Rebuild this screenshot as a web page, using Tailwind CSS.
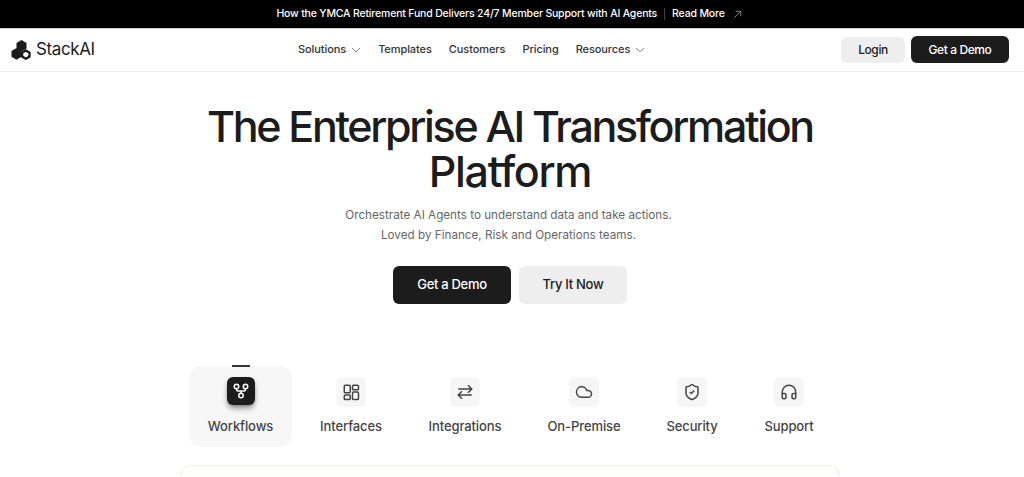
<!DOCTYPE html>
<html lang="en">
<head>
  <meta charset="UTF-8" />
  <meta name="viewport" content="width=device-width, initial-scale=1.0"/>
  <title>StackAI</title>
  <script src="https://cdn.jsdelivr.net/npm/@tailwindcss/browser@4"></script>
</head>
<body class="bg-white text-[#1c1c1c] font-['Inter',sans-serif] h-[477px] overflow-hidden">
  <div class="h-7 bg-black text-white flex items-center justify-center pr-[5px] text-[10.5px] tracking-[-0.18px] font-medium border-b border-[#ccc] box-content -mb-px">
    <span>How the YMCA Retirement Fund Delivers 24/7 Member Support with AI Agents</span>
    <span class="w-px h-3 bg-[#444] mx-[7px]"></span>
    <span>Read More</span>
    <svg class="w-[11px] h-[11px] ml-[7px] text-[#888]" viewBox="0 0 12 12" fill="none" stroke="currentColor" stroke-width="1"><path d="M2.500 9.500l7-7M4 2.500h5.500V8"/></svg>
  </div>

  <header class="h-[44px] border-b border-[#efefef] flex items-center pl-[11px] pr-[15px]">
    <div class="flex items-center gap-[5px] w-[287px]">
      <svg class="w-[20px] h-[20px]" viewBox="0 0 20 20"><path d="M10.500 0l5 2.900v5.700l-5 2.900-5-2.900V2.900z" fill="#1c1c1c"/><path d="M5.500 8l5 2.900v5.800l-5 3-5-3v-5.800z" fill="#1c1c1c"/><path d="M14.800 10.500l3.700 2.100v3.900l-3.700 2.200-3.700-2.200v-3.900z" fill="#fff" stroke="#1c1c1c" stroke-width="2.400"/></svg>
      <span class="text-[17px] tracking-[-0.4px]">StackAI</span>
    </div>
    <nav class="flex items-center text-[11px] tracking-[-0.08px] font-medium text-[#333] gap-[17px]">
      <span class="flex items-center gap-[5px]">Solutions
        <svg class="w-[10px] h-[10px] text-[#888]" viewBox="0 0 10 10" fill="none" stroke="currentColor"><path d="M1 3l4 4 4-4"/></svg>
      </span>
      <span>Templates</span>
      <span>Customers</span>
      <span>Pricing</span>
      <span class="flex items-center gap-[5px]">Resources
        <svg class="w-[10px] h-[10px] text-[#888]" viewBox="0 0 10 10" fill="none" stroke="currentColor"><path d="M1 3l4 4 4-4"/></svg>
      </span>
    </nav>
    <div class="ml-auto flex items-center gap-[6px] text-[12px] tracking-[-0.4px] font-medium">
      <a class="w-[64px] h-[26px] rounded-md bg-[#eeeeee] flex items-center justify-center">Login</a>
      <a class="w-[98px] h-[27px] rounded-md bg-[#1c1c1c] text-white flex items-center justify-center">Get a Demo</a>
    </div>
  </header>

  <main class="flex flex-col items-center pr-[4px]">
    <h1 class="mt-[32px] text-[43px] leading-[45px] font-medium tracking-[-2.35px] text-center text-[#1c1c1c]">The Enterprise AI Transformation<br><span class="tracking-[-1.3px]">Platform</span></h1>
    <p class="mt-[11px] pr-[3px] text-[11.7px] leading-[20px] text-[#666] text-center">Orchestrate AI Agents to understand data and take actions.<br>Loved by Finance, Risk and Operations teams.</p>
    <div class="mt-[21px] flex gap-[8px] text-[13px] tracking-[-0.3px] font-medium">
      <a class="w-[118px] h-[38px] rounded-md bg-[#1c1c1c] text-white flex items-center justify-center">Get a Demo</a>
      <a class="w-[108px] h-[38px] rounded-md bg-[#eeeeee] flex items-center justify-center">Try It Now</a>
    </div>

    <div class="mt-[62px] flex items-start text-[13px] tracking-[-0.1px] font-medium text-[#444] ml-[11px]">
      <div class="relative w-[103px] h-[81px] rounded-xl bg-[#f7f7f7] flex flex-col items-center pt-[11px] gap-[12px]">
        <span class="absolute -top-[1px] w-[18px] h-[2px] bg-[#333]"></span>
        <span class="w-[28px] h-[28px] rounded-md bg-[#1c1c1c] text-white flex items-center justify-center shadow-md shadow-black/40">
          <svg class="w-[18px] h-[18px]" viewBox="0 0 24 24" fill="none" stroke="currentColor" stroke-width="2"><circle cx="6" cy="6" r="3"/><circle cx="18" cy="6" r="3"/><circle cx="12" cy="18" r="3"/><path d="M6 9v1a2 2 0 0 0 2 2h8a2 2 0 0 0 2-2V9M12 12v3"/></svg>
        </span>
        <span>Workflows</span>
      </div>
      <div class="w-[118px] flex flex-col items-center pt-[11px] gap-[10px]">
        <span class="w-[30px] h-[30px] rounded-md bg-[#f6f6f6] flex items-center justify-center">
          <svg class="w-[18px] h-[18px]" viewBox="0 0 24 24" fill="none" stroke="currentColor" stroke-width="2"><rect x="3" y="3" width="8" height="10" rx="1.500"/><rect x="14" y="3" width="8" height="6" rx="1.500"/><rect x="14" y="12" width="8" height="10" rx="1.500"/><rect x="3" y="16" width="8" height="6" rx="1.500"/></svg>
        </span>
        <span>Interfaces</span>
      </div>
      <div class="w-[110px] flex flex-col items-center pt-[11px] gap-[10px]">
        <span class="w-[30px] h-[30px] rounded-md bg-[#f6f6f6] flex items-center justify-center">
          <svg class="w-[18px] h-[18px]" viewBox="0 0 24 24" fill="none" stroke="currentColor" stroke-width="2"><path d="M3 8h18M16 3l5 5-5 5M21 16H3M8 11l-5 5 5 5"/></svg>
        </span>
        <span>Integrations</span>
      </div>
      <div class="w-[128px] flex flex-col items-center pt-[11px] gap-[10px]">
        <span class="w-[30px] h-[30px] rounded-md bg-[#f6f6f6] flex items-center justify-center">
          <svg class="w-[18px] h-[18px]" viewBox="0 0 24 24" fill="none" stroke="currentColor" stroke-width="2"><path d="M17.500 19H9a7 7 0 1 1 6.700-9h1.800a4.500 4.500 0 1 1 0 9z"/></svg>
        </span>
        <span>On-Premise</span>
      </div>
      <div class="w-[88px] flex flex-col items-center pt-[11px] gap-[10px]">
        <span class="w-[30px] h-[30px] rounded-md bg-[#f6f6f6] flex items-center justify-center">
          <svg class="w-[18px] h-[18px]" viewBox="0 0 24 24" fill="none" stroke="currentColor" stroke-width="2"><path d="M20 13c0 5-3.500 7.500-7.700 9a1 1 0 0 1-.6 0C7.500 20.500 4 18 4 13V6a1 1 0 0 1 1-1c2 0 4.500-1.200 6.200-2.700a1.200 1.200 0 0 1 1.600 0C14.500 3.800 17 5 19 5a1 1 0 0 1 1 1z"/><path d="M9 12l2 2 4-4"/></svg>
        </span>
        <span>Security</span>
      </div>
      <div class="w-[106px] flex flex-col items-center pt-[11px] gap-[10px]">
        <span class="w-[30px] h-[30px] rounded-md bg-[#f6f6f6] flex items-center justify-center">
          <svg class="w-[18px] h-[18px]" viewBox="0 0 24 24" fill="none" stroke="currentColor" stroke-width="2"><path d="M3 14h3a2 2 0 0 1 2 2v3a2 2 0 0 1-2 2H5a2 2 0 0 1-2-2v-7a9 9 0 0 1 18 0v7a2 2 0 0 1-2 2h-1a2 2 0 0 1-2-2v-3a2 2 0 0 1 2-2h3"/></svg>
        </span>
        <span>Support</span>
      </div>
    </div>

    <div class="mt-[18px] w-[660px] h-[11px] rounded-t-2xl border border-b-0 border-[#f1f0ea] bg-[#fdfdfb]"></div>
  </main>
</body>
</html>
